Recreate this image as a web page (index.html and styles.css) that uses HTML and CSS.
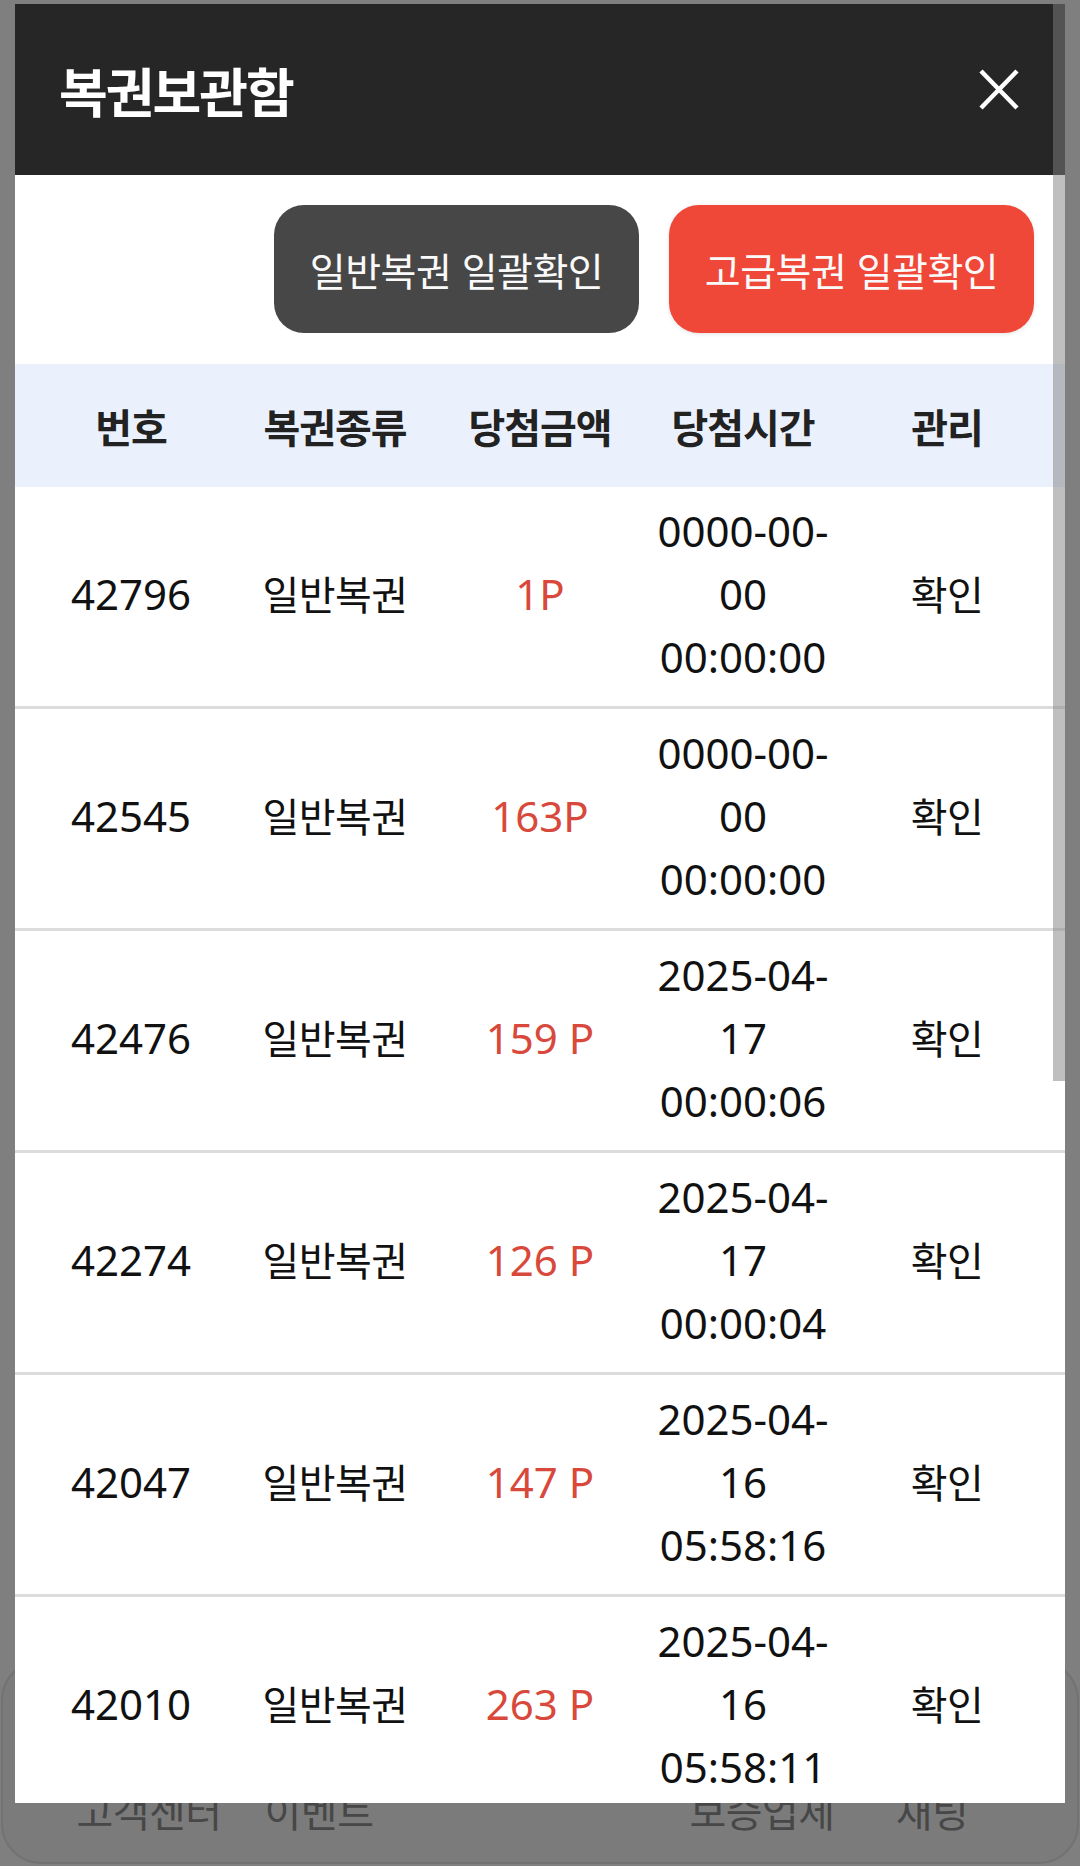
FILE: index.html
```html
<!DOCTYPE html>
<html lang="ko">
<head>
  <meta charset="UTF-8">
  <meta name="viewport" content="width=device-width,initial-scale=1.0">
  <title>복권보관함</title>
  <link rel="stylesheet" href="styles.css">
</head>
<body>
  <!-- 뒤쪽 페이지 (딤 처리됨) -->
  <div class="page">
    <nav class="bottom-nav">
      <span>고객센터</span>
      <span>이벤트</span>
      <span></span>
      <span>보증업체</span>
      <span>채팅</span>
    </nav>
  </div>

  <!-- 복권보관함 모달 -->
  <div class="modal">
    <header class="modal-head">
      <h2>복권보관함</h2>
      <button class="close" aria-label="닫기">
        <svg width="42" height="43" viewBox="0 0 42 43">
          <path d="M3 3 L39 40 M39 3 L3 40" stroke="#fff" stroke-width="4.5" fill="none"/>
        </svg>
      </button>
    </header>

    <div class="actions">
      <button class="btn btn-normal">일반복권 일괄확인</button>
      <button class="btn btn-premium">고급복권 일괄확인</button>
    </div>

    <div class="thead">
      <span>번호</span>
      <span>복권종류</span>
      <span>당첨금액</span>
      <span>당첨시간</span>
      <span>관리</span>
    </div>

    <div class="tbody">
      <div class="row">
        <span>42796</span><span class="ko">일반복권</span><span class="amount">1P</span>
        <span>0000-00-<br>00<br>00:00:00</span><span class="ko">확인</span>
      </div>
      <div class="row">
        <span>42545</span><span class="ko">일반복권</span><span class="amount">163P</span>
        <span>0000-00-<br>00<br>00:00:00</span><span class="ko">확인</span>
      </div>
      <div class="row">
        <span>42476</span><span class="ko">일반복권</span><span class="amount">159 P</span>
        <span>2025-04-<br>17<br>00:00:06</span><span class="ko">확인</span>
      </div>
      <div class="row">
        <span>42274</span><span class="ko">일반복권</span><span class="amount">126 P</span>
        <span>2025-04-<br>17<br>00:00:04</span><span class="ko">확인</span>
      </div>
      <div class="row">
        <span>42047</span><span class="ko">일반복권</span><span class="amount">147 P</span>
        <span>2025-04-<br>16<br>05:58:16</span><span class="ko">확인</span>
      </div>
      <div class="row">
        <span>42010</span><span class="ko">일반복권</span><span class="amount">263 P</span>
        <span>2025-04-<br>16<br>05:58:11</span><span class="ko">확인</span>
      </div>
    </div>

    <div class="scroll-thumb"></div>
  </div>
</body>
</html>
```

FILE: styles.css
```css
/* ——— 색상 변수 ——— */
:root {
  --dim: #7f7f7f;    --dark: #262626;
  --line: #dcdcdc;   --thead: #ebf1fc;
  --red: #ef4738;    --point: #d8483b;
  --gray: #474747;
  --cols: 232px 176px 234px 172px 1fr;
}
html, body { margin:0; height:100%; }
body {
  font-family:"Noto Sans","Noto Sans CJK KR",sans-serif;
  background:var(--dim); color:#111; overflow:hidden;
}

/* ——— 뒤쪽 페이지 ——— */
.page {
  height:100vh; box-sizing:border-box; padding:0 1px 2px;
  display:flex; flex-direction:column; justify-content:flex-end;
}
.bottom-nav {
  height:204px; box-sizing:border-box; padding:0 60px 32px 61px;
  border:2px solid #727272; border-radius:40px;
  background:#7b7b7b; color:var(--gray);
  display:grid; grid-template-columns:170px 170px 1fr 170px 170px;
  align-items:end; text-align:center;
  font-family:"Noto Sans CJK KR",sans-serif; font-size:40px; line-height:40px;
  letter-spacing:-0.5px;
}

/* ——— 모달 ——— */
.modal {
  position:fixed; top:4px; left:15px; width:1050px; bottom:63px;
  background:#fff; overflow:hidden;
}
.modal-head {
  height:171px; padding:0 45px 0 44px; background:var(--dark);
  display:flex; align-items:center; justify-content:space-between;
}
.modal-head h2 {
  margin:0; color:#fff; letter-spacing:-2px;
  font:bold 53px "Noto Sans CJK KR",sans-serif;
}
.close { background:none; border:none; padding:0; cursor:pointer; }
.close svg { display:block; }

.actions {
  display:flex; justify-content:flex-end; gap:30px;
  padding:30px 31px 31px;
}
.btn {
  width:365px; height:128px; border:none; border-radius:30px;
  color:#fafafa; font-family:"Noto Sans CJK KR",sans-serif; font-size:39px;
  letter-spacing:-0.5px; cursor:pointer;
}
.btn-normal { background:var(--gray); }
.btn-premium { background:var(--red); box-shadow:0 1px 4px rgba(0,0,0,0.12); }

/* ——— 테이블 ——— */
.thead {
  height:123px; background:var(--thead);
  display:grid; grid-template-columns:var(--cols);
  align-items:center; text-align:center;
  font-family:"Noto Sans CJK KR",sans-serif; font-weight:bold;
  font-size:40px; letter-spacing:-1px; color:#222;
}
.row {
  padding:12px 0 18px; border-bottom:3px solid var(--line);
  display:grid; grid-template-columns:var(--cols);
  align-items:center; text-align:center;
  font-size:42px; line-height:63px;
}
.row .ko {
  font-family:"Noto Sans CJK KR",sans-serif; font-size:40px; letter-spacing:-0.5px;
}
.row .amount { color:var(--point); }

.scroll-thumb {
  position:absolute; top:0; right:0; width:12px; height:1077px;
  background:rgba(128,128,128,0.5);
}
```
